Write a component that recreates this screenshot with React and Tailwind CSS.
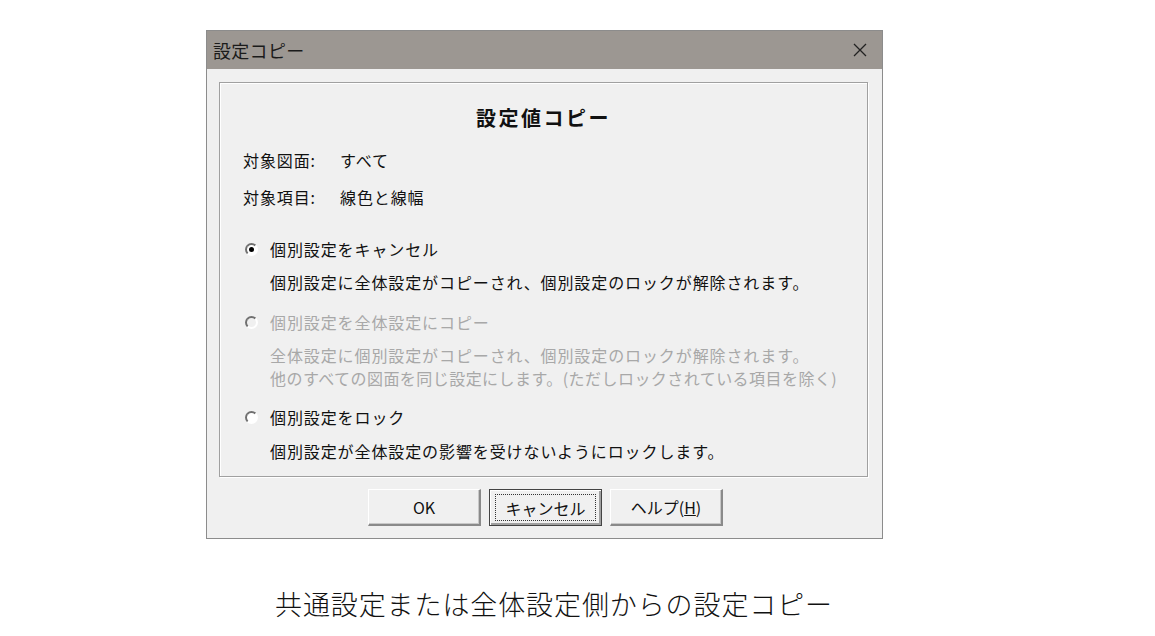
const jp = { fontFamily: '"Noto Sans CJK JP", "Noto Sans", sans-serif' };

function Radio({ checked, disabled }) {
  return (
    <span
      className={`relative inline-flex h-[13px] w-[13px] shrink-0 items-center justify-center rounded-full border-2 border-t-[#707070] border-l-[#707070] border-r-white border-b-white ${
        disabled ? "bg-[#f0f0f0]" : "bg-white"
      }`}
    >
      {checked && <span className="h-[5px] w-[5px] rounded-full bg-black" />}
    </span>
  );
}

function Button({ children, focused }) {
  return (
    <button
      className={`flex h-[37px] w-[113px] items-center justify-center bg-[#f0f0f0] text-[16px] text-[#111] ${
        focused
          ? "border border-[#444] shadow-[inset_1px_1px_0_#fff,inset_-2px_-2px_0_#a0a0a0]"
          : "border-t border-l border-r-2 border-b-2 border-t-[#fff] border-l-[#fff] border-r-[#8a8a8a] border-b-[#8a8a8a] shadow-[inset_-1px_-1px_0_#c8c8c8]"
      }`}
      style={jp}
    >
      {focused ? (
        <span className="flex h-[27px] w-[101px] items-center justify-center border border-dotted border-[#333]">
          {children}
        </span>
      ) : (
        children
      )}
    </button>
  );
}

export default function App() {
  return (
    <div className="min-h-[636px] w-[1155px] bg-white" style={jp}>
      <div className="ml-[206px] pt-[30px]">
        <div className="h-[509px] w-[677px] border border-[#8c8c8c] bg-[#f0f0f0]">
          {/* title bar */}
          <div className="flex h-[38px] items-center justify-between bg-[#9c9792] pl-[6px] pr-[14px]">
            <span className="text-[18px] tracking-[0.3px] text-[#1b1b1b]">設定コピー</span>
            <svg width="16" height="16" viewBox="0 0 16 16" aria-hidden="true">
              <path d="M2 2 L14 14 M14 2 L2 14" stroke="#222" strokeWidth="1.3" fill="none" />
            </svg>
          </div>

          <div className="px-[12px] pt-[13px]">
            {/* group box */}
            <div className="flex h-[395px] w-[649px] flex-col border border-[#a0a0a0] pl-[23px] text-[16px] tracking-[0.9px] text-[#111] shadow-[inset_1px_1px_0_#fff,1px_1px_0_#fff]">
              <div className="-ml-[23px] mt-[23px] h-[24px] text-center text-[20px] font-bold leading-[24px] tracking-[2.5px]">
                設定値コピー
              </div>
              <div className="mt-[19px] flex h-[22px] items-center leading-[22px]">
                <span className="w-[97px]">対象図面:</span>
                <span>すべて</span>
              </div>
              <div className="mt-[15px] flex h-[22px] items-center leading-[22px]">
                <span className="w-[97px]">対象項目:</span>
                <span>線色と線幅</span>
              </div>

              <div className="mt-[30px] flex h-[22px] items-center gap-[12px] pl-[2px] leading-[22px]">
                <Radio checked />
                <span>個別設定をキャンセル</span>
              </div>
              <div className="mt-[11px] h-[22px] pl-[27px] leading-[22px]">
                個別設定に全体設定がコピーされ、個別設定のロックが解除されます。
              </div>

              <div className="mt-[18px] flex h-[22px] items-center gap-[12px] pl-[2px] leading-[22px] text-[#a8a8a8]">
                <Radio disabled />
                <span>個別設定を全体設定にコピー</span>
              </div>
              <div className="mt-[11px] pl-[27px] leading-[23px] text-[#a8a8a8]">
                <div>全体設定に個別設定がコピーされ、個別設定のロックが解除されます。</div>
                <div className="tracking-[0.45px]">他のすべての図面を同じ設定にします。(ただしロックされている項目を除く)</div>
              </div>

              <div className="mt-[16px] flex h-[22px] items-center gap-[12px] pl-[2px] leading-[22px]">
                <Radio />
                <span>個別設定をロック</span>
              </div>
              <div className="mt-[12px] h-[22px] pl-[27px] leading-[22px]">
                個別設定が全体設定の影響を受けないようにロックします。
              </div>
            </div>

            {/* buttons */}
            <div className="mt-[12px] flex justify-center gap-[8px] pl-[2px]">
              <Button>OK</Button>
              <Button focused>キャンセル</Button>
              <Button>
                ヘルプ(<span className="underline">H</span>)
              </Button>
            </div>
          </div>
        </div>
      </div>

      <div className="ml-[275px] mt-[47px] h-[36px] text-[27px] font-light leading-[36px] tracking-[0.9px] text-[#111]">
        共通設定または全体設定側からの設定コピー
      </div>
    </div>
  );
}
